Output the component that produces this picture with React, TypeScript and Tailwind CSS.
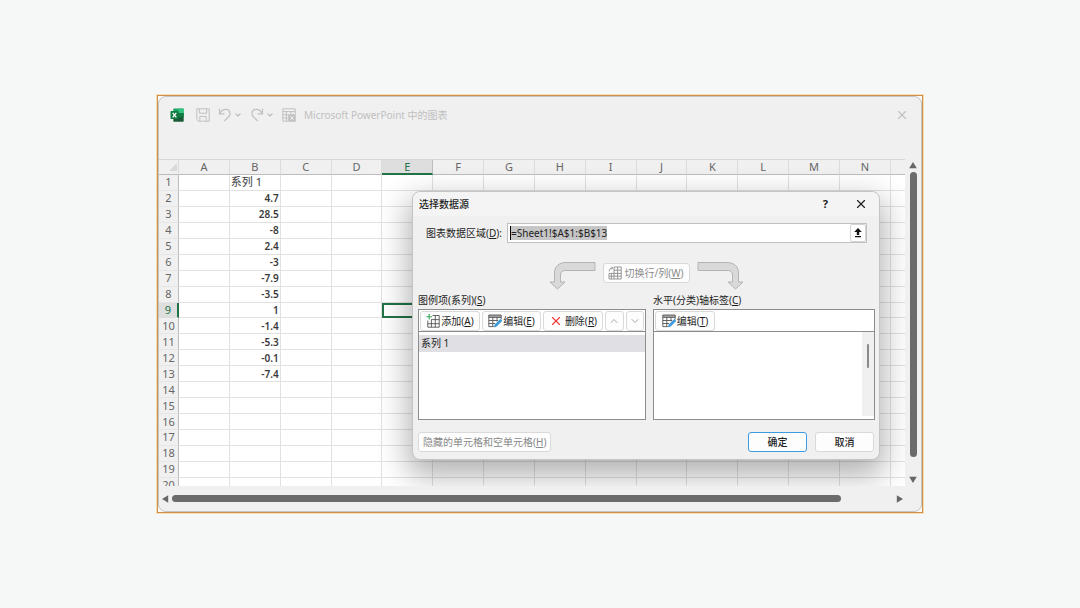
import { useState } from "react";
import { ChevronDown, ChevronUp, X } from "lucide-react";

const COLUMNS = ["A", "B", "C", "D", "E", "F", "G", "H", "I", "J", "K", "L", "M", "N"];
const ROWS = Array.from({ length: 20 }, (_, i) => i + 1);
const SERIES = ["4.7", "28.5", "-8", "2.4", "-3", "-7.9", "-3.5", "1", "-1.4", "-5.3", "-0.1", "-7.4"];

const dialogButton =
  "flex items-center justify-center rounded-[3px] border border-[#d9d9d9] bg-[#fdfdfd] whitespace-nowrap";

function ExcelLogo() {
  return (
    <svg viewBox="0 0 14 14" className="size-3.5">
      <path d="M4 .5h9a.7.7 0 0 1 .7.7V5H3.3V1.2A.7.7 0 0 1 4 .5Z" fill="#21a366" />
      <path d="M8.5.5H13a.7.7 0 0 1 .7.7V5H8.5Z" fill="#33c481" />
      <path d="M3.3 5h10.4v8a.7.7 0 0 1-.7.7H4a.7.7 0 0 1-.7-.7Z" fill="#185c37" />
      <path d="M8.5 5h5.2v4.2H8.5Z" fill="#107c41" />
      <rect x="0.5" y="3" width="8" height="8" rx="0.8" fill="#107c41" />
      <path d="m2.7 4.8 3.6 4.5M6.3 4.8 2.7 9.3" stroke="#fff" strokeWidth="1.3" />
    </svg>
  );
}

function SaveIcon() {
  return (
    <svg viewBox="0 0 14 14" className="size-3.5" fill="none" stroke="currentColor">
      <path d="M.8.8h12.4v12.4H2.6L.8 11.5Z" />
      <path d="M3.4.8v4.4h7.2V.8M3.8 13.2V8.4h6.4v4.8" />
    </svg>
  );
}

function UndoIcon({ flip = false }: { flip?: boolean }) {
  return (
    <svg
      viewBox="0 0 14 14"
      className={flip ? "size-3.5 -scale-x-100" : "size-3.5"}
      fill="none"
      stroke="currentColor"
      strokeWidth="1.2"
    >
      <path d="M1.5.8v5h5" />
      <path d="M1.7 5.6C3.5 2.6 5.4 1.4 7.7 1.4c2.5 0 4.3 1.8 4.3 4.1 0 1.4-.6 2.5-1.6 3.5L6.2 13.2" />
    </svg>
  );
}

function SheetIcon() {
  return (
    <svg viewBox="0 0 14 14" className="size-3.5" fill="none" stroke="currentColor">
      <path d="M6 13.2H.8V.8h12.4V6M.8 3.6h12.4M.8 6.8h5.6M.8 10h5M4.4 3.6v9.6M8.8 3.6V6" />
      <rect x="6.8" y="6.8" width="6.4" height="6.4" fill="currentColor" />
      <path d="m8.4 8.2 3.2 3.6m0-3.6-3.2 3.6" stroke="#f0f0f0" />
    </svg>
  );
}

function AddIcon() {
  return (
    <svg viewBox="0 0 14 14" className="size-3.5" fill="none" stroke="#555" strokeWidth="0.9">
      <path d="M6.5 1.5h6.7v11.7H1.8V6.5M1.8 9.7h11.4M5 5.6h8.2M5.4 6v7.2M9.3 1.5v11.7" />
      <path d="M3.2 0v5.6M.4 2.8H6" stroke="#35a65b" strokeWidth="1.1" />
    </svg>
  );
}

function EditIcon() {
  return (
    <svg viewBox="0 0 14 14" className="size-3.5" fill="none" stroke="#555" strokeWidth="0.9">
      <path d="M.8 1h12.4v2.4H.8Z" fill="#a8a8a8" />
      <path d="M13.2 3.4V5M.8 3.4v9.2h5M.8 6.5h9.4M.8 9.5h6.4M4.8 3.4v9.2M9 3.4v4" />
      <path d="m6.6 12.9.6-2.3 5.4-5.4 1.3 1.5-5.3 5.4Z" fill="#3d9ee0" stroke="#2f8fd3" />
    </svg>
  );
}

function SwitchIcon() {
  return (
    <svg viewBox="0 0 14 14" className="size-3.5" fill="none" stroke="#8c8c8c" strokeWidth="0.9">
      <path d="M6 1h7.2v12H1V7.4h12.2M6 1v12M9.6 1v12M1 10.2h12.2M6 4.2h7.2" />
      <path d="M1.2 5.4C1.2 3 2.3 2 4.6 2M3.3.6 4.7 2 3.3 3.4M3.4 7.4V13" />
    </svg>
  );
}

function CurvedArrow({ flip = false }: { flip?: boolean }) {
  return (
    <svg
      viewBox="0 0 47 29"
      className={flip ? "h-[29px] w-[47px] -scale-x-100" : "h-[29px] w-[47px]"}
    >
      <path
        d="M46 1.5H17C9.5 1.5 5.5 6 5.500 12v9H1l7.500 7 7.500-7h-4.500v-7c0-3 1.500-4.500 4.500-4.500H46Z"
        fill="#d9d9d9"
        stroke="#b4b4b4"
      />
    </svg>
  );
}

function TitleBar() {
  return (
    <header className="flex h-9 items-center pr-3 pl-[11px] text-[#c0c0c0]">
      <ExcelLogo />
      <button aria-label="保存" className="ml-3">
        <SaveIcon />
      </button>
      <button aria-label="撤消" className="ml-2 flex items-center gap-0.5">
        <UndoIcon />
        <ChevronDown className="size-2" strokeWidth={4} />
      </button>
      <button aria-label="恢复" className="ml-2 flex items-center gap-0.5">
        <UndoIcon flip />
        <ChevronDown className="size-2" strokeWidth={4} />
      </button>
      <button aria-label="在 Excel 中编辑数据" className="ml-2">
        <SheetIcon />
      </button>
      <h1 className="ml-2 text-[10px]">Microsoft PowerPoint 中的图表</h1>
      <button aria-label="关闭" className="ml-auto">
        <X className="size-3.5" strokeWidth={2} />
      </button>
    </header>
  );
}

function Sheet() {
  return (
    <table className="h-[335px] w-full table-fixed border-separate border-spacing-0 bg-white text-[11px] leading-3 text-[#3a3a3a]">
      <colgroup>
        <col className="w-5" />
        {COLUMNS.map((c) => (
          <col key={c} />
        ))}
        <col className="w-3.5" />
      </colgroup>
      <thead>
        <tr className="h-4 bg-[#f0f0f0] text-[#666]">
          <th className="border-t border-r border-b border-t-[#d6d6d6] border-r-[#dcdcdc] border-b-[#bdbdbd] p-0">
            <svg viewBox="0 0 10 10" className="ml-auto size-2.5">
              <path d="M9 1v8H1Z" fill="#d9d9d9" />
            </svg>
          </th>
          {COLUMNS.map((c) => (
            <th
              key={c}
              className={
                c === "E"
                  ? "border-t border-r border-b-2 border-t-[#d6d6d6] border-r-[#bdbdbd] border-b-[#217346] bg-[#dedede] p-0 font-normal text-[#217346]"
                  : "border-t border-r border-b border-t-[#d6d6d6] border-r-[#dcdcdc] border-b-[#bdbdbd] p-0 font-normal"
              }
            >
              {c}
            </th>
          ))}
          <th className="border-t border-b border-t-[#d6d6d6] border-b-[#bdbdbd] p-0" />
        </tr>
      </thead>
      <tbody>
        {ROWS.map((r) => (
          <tr key={r}>
            <th
              className={
                r === 9
                  ? "border-r-2 border-b border-r-[#217346] border-b-[#dcdcdc] bg-[#dedede] p-0 font-normal text-[#217346]"
                  : "border-r border-b border-r-[#bdbdbd] border-b-[#e6e6e6] bg-[#f0f0f0] p-0 font-normal text-[#666]"
              }
            >
              {r}
            </th>
            {COLUMNS.map((c) => {
              if (c === "B" && r === 1) {
                return (
                  <td key={c} className="border-r border-b border-[#e1e1e1] p-0 pl-px text-[11px]">
                    系列 1
                  </td>
                );
              }
              if (c === "B") {
                return (
                  <td
                    key={c}
                    className="border-r border-b border-[#e1e1e1] p-0 pr-px text-right text-[10px] font-semibold"
                  >
                    {SERIES[r - 2]}
                  </td>
                );
              }
              if (c === "E" && r === 9) {
                return <td key={c} className="border-2 border-[#217346] p-0" />;
              }
              return <td key={c} className="border-r border-b border-[#e1e1e1] p-0" />;
            })}
            <td className="border-b border-[#e1e1e1] p-0" />
          </tr>
        ))}
      </tbody>
    </table>
  );
}

function SourceDialog() {
  const [range, setRange] = useState("=Sheet1!$A$1:$B$13");

  return (
    <section
      role="dialog"
      aria-labelledby="dialog-title"
      className="absolute top-8 right-[25px] left-[253px] rounded-lg border border-[#c4c4c4] bg-[#f0f0f0] text-[10px] leading-4 text-[#1f1f1f] shadow-[0_12px_30px_4px_rgba(0,0,0,0.3)]"
    >
      <div className="flex h-6 items-center rounded-t-lg bg-[#f4f4f4] pr-[11px] pl-1.5">
        <h2 id="dialog-title" className="font-medium">
          选择数据源
        </h2>
        <button aria-label="帮助" className="ml-auto text-[11px] font-bold">
          ?
        </button>
        <button aria-label="关闭" className="ml-[26px]">
          <X className="size-3.5" strokeWidth={2} />
        </button>
      </div>

      <div className="mt-[7px] flex h-5 items-center pr-3 pl-[13px]">
        <label htmlFor="range" className="w-[81px] shrink-0 whitespace-nowrap">
          图表数据区域(<u>D</u>):
        </label>
        <div className="flex h-5 flex-1 items-center border border-[#bfbfc4] bg-white pl-0.5">
          <input
            id="range"
            value={range}
            onChange={(e) => setRange(e.target.value)}
            className="field-sizing-content h-3.5 border-l border-black bg-[#c6c6c6] outline-none"
          />
          <button
            aria-label="折叠对话框"
            className="ml-auto flex h-full w-4 items-center justify-center rounded-[2px] border border-[#d4d4d4]"
          >
            <svg viewBox="0 0 8 10" className="h-2.5 w-2" fill="#111">
              <path d="M4 0 7.800 4H5.200v3H2.800V4H.2ZM1 8h6v1.200H1Z" />
            </svg>
          </button>
        </div>
      </div>

      <div className="mt-[18px] flex items-start justify-center px-2">
        <CurvedArrow />
        <button disabled className={`${dialogButton} mx-[7px] mt-0.5 h-5 w-[87px] gap-0.5 text-[#8a8a8a]`}>
          <SwitchIcon />
          <span>
            切换行/列(<u>W</u>)
          </span>
        </button>
        <CurvedArrow flip />
      </div>

      <div className="mt-0.5 flex gap-[7px] pr-1 pl-[5px]">
        <div className="w-[228px]">
          <h3 className="h-[17px]">
            图例项(系列)(<u>S</u>)
          </h3>
          <div className="h-[111px] border border-[#8c8c8c] bg-white">
            <div className="flex h-[22px] items-center gap-0.5 border-b border-[#8c8c8c] px-px">
              <button className={`${dialogButton} h-5 w-[60px] gap-px`}>
                <AddIcon />
                <span>
                  添加(<u>A</u>)
                </span>
              </button>
              <button className={`${dialogButton} h-5 w-[59px] gap-px`}>
                <EditIcon />
                <span>
                  编辑(<u>E</u>)
                </span>
              </button>
              <button className={`${dialogButton} h-5 w-[60px] gap-0.5`}>
                <X className="size-3.5 text-[#ee3b3b]" strokeWidth={2} />
                <span>
                  删除(<u>R</u>)
                </span>
              </button>
              <button aria-label="上移" className={`${dialogButton} h-5 flex-1 text-[#a8a8a8]`}>
                <ChevronUp className="size-3" />
              </button>
              <button aria-label="下移" className={`${dialogButton} h-5 flex-1 text-[#a8a8a8]`}>
                <ChevronDown className="size-3" />
              </button>
            </div>
            <ul className="pt-[3px]">
              <li className="h-[17px] bg-[#e0dfe4] pl-0.5">系列 1</li>
            </ul>
          </div>
        </div>

        <div className="flex-1">
          <h3 className="h-[17px]">
            水平(分类)轴标签(<u>C</u>)
          </h3>
          <div className="flex h-[111px] flex-col border border-[#8c8c8c] bg-white">
            <div className="flex h-[22px] items-center border-b border-[#8c8c8c] px-px">
              <button className={`${dialogButton} h-5 w-[60px] gap-px`}>
                <EditIcon />
                <span>
                  编辑(<u>T</u>)
                </span>
              </button>
            </div>
            <div className="mb-[3px] ml-auto flex w-3 flex-1 justify-center bg-[#f0f0f0] pt-3">
              <div className="h-6 w-0.5 rounded-full bg-[#8a8a8a]" />
            </div>
          </div>
        </div>
      </div>

      <div className="flex h-[39px] items-start px-[5px] pt-3">
        <button disabled className={`${dialogButton} h-5 px-1 text-[#8a8a8a]`}>
          <span>
            隐藏的单元格和空单元格(<u>H</u>)
          </span>
        </button>
        <button className="ml-auto h-5 w-[59px] rounded-[3px] border border-[#3f9be0] bg-[#fdfdfd] leading-4 font-medium">
          确定
        </button>
        <button className={`${dialogButton} ml-2 h-5 w-[59px] font-medium`}>取消</button>
      </div>
    </section>
  );
}

function Triangle({ className }: { className: string }) {
  return (
    <svg viewBox="0 0 8 8" className={`size-2 shrink-0 ${className}`}>
      <path d="M.2 7.200 4 1l3.800 6.200Z" fill="#666" />
    </svg>
  );
}

export default function App() {
  return (
    <div className="flex min-h-screen items-center justify-center bg-[#f6f8f8] font-['Noto_Sans','Noto_Sans_CJK_SC',sans-serif]">
      <main className="w-full max-w-[766px] border border-[#cb8f4e] bg-[#f6f8f8] ring-1 ring-[#f8dcb4]">
        <div className="rounded-lg border border-[#c9c5c0] bg-[#f0f0f0]">
          <TitleBar />
          <div className="flex pt-[26px]">
            <div className="relative h-[327px] flex-1 overflow-hidden">
              <Sheet />
              <SourceDialog />
            </div>
            <div className="flex w-4 flex-col items-center gap-[3px] py-0.5">
              <Triangle className="" />
              <div className="w-[7px] flex-1 rounded-full bg-[#6b6b6b]" />
              <Triangle className="mt-4 rotate-180" />
            </div>
          </div>
          <div className="flex h-[25px] items-center pr-[17px] pl-0.5">
            <Triangle className="-rotate-90" />
            <div className="mr-[55px] ml-[3px] h-[7px] flex-1 rounded-full bg-[#6b6b6b]" />
            <Triangle className="rotate-90" />
          </div>
        </div>
      </main>
    </div>
  );
}
